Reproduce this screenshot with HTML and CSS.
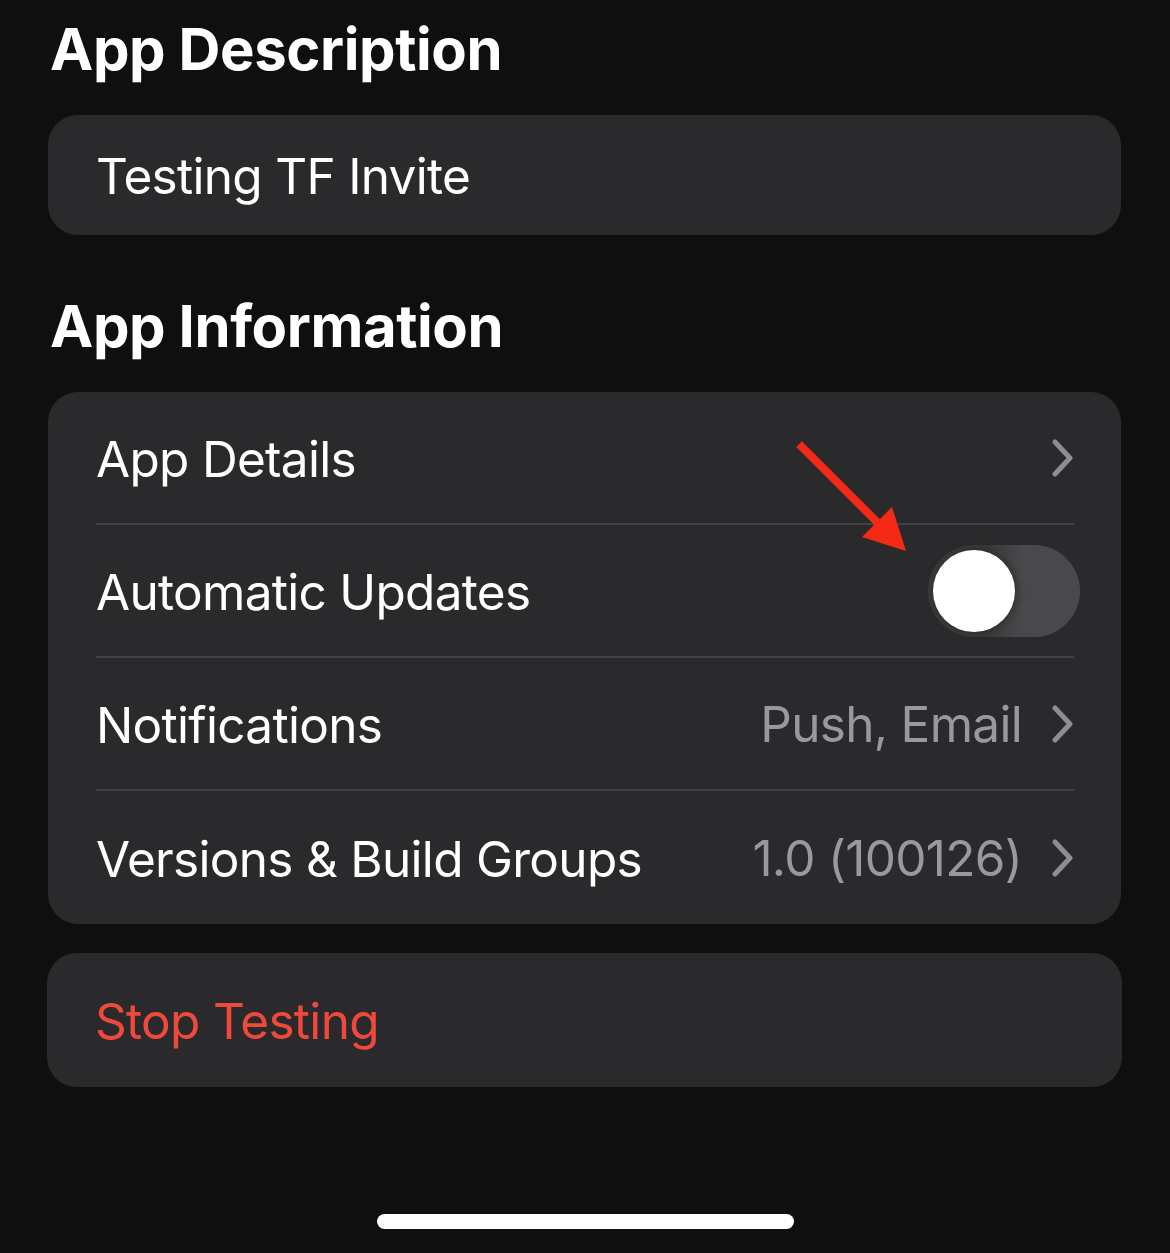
FILE: index.html
```html
<!DOCTYPE html>
<html>
<head>
<meta charset="utf-8">
<link rel="stylesheet" href="styles.css">
</head>
<body>
<div class="screen">
  <h2 class="section-title first">App Description</h2>
  <div class="card">
    <div class="row single"><span class="label">Testing TF Invite</span></div>
  </div>

  <h2 class="section-title">App Information</h2>
  <div class="card">
    <div class="row">
      <span class="label">App Details</span>
      <span class="trail">
        <svg class="chev" width="22" height="38" viewBox="0 0 22 38"><path d="M3 3 L18 19 L3 35" fill="none" stroke="#8d8d92" stroke-width="5" stroke-linecap="round" stroke-linejoin="round"/></svg>
      </span>
    </div>
    <div class="row">
      <span class="label">Automatic Updates</span>
      <span class="toggle"><span class="knob"></span></span>
      <svg class="arrow" width="130" height="130" viewBox="0 0 130 130">
        <line x1="8" y1="8" x2="90" y2="90" stroke="#f42a17" stroke-width="8" stroke-linecap="square"/>
        <polygon points="112,112 68,98 98,68" fill="#f42a17"/>
      </svg>
    </div>
    <div class="row">
      <span class="label">Notifications</span>
      <span class="trail">
        <span class="value">Push, Email</span>
        <svg class="chev" width="22" height="38" viewBox="0 0 22 38"><path d="M3 3 L18 19 L3 35" fill="none" stroke="#8d8d92" stroke-width="5" stroke-linecap="round" stroke-linejoin="round"/></svg>
      </span>
    </div>
    <div class="row">
      <span class="label">Versions &amp; Build Groups</span>
      <span class="trail">
        <span class="value">1.0 (100126)</span>
        <svg class="chev" width="22" height="38" viewBox="0 0 22 38"><path d="M3 3 L18 19 L3 35" fill="none" stroke="#8d8d92" stroke-width="5" stroke-linecap="round" stroke-linejoin="round"/></svg>
      </span>
    </div>
  </div>

  <div class="card stop">
    <div class="row single tall"><span class="label danger">Stop Testing</span></div>
  </div>

  <div class="home-bar"></div>
</div>
</body>
</html>
```

FILE: styles.css
```css
* { box-sizing: border-box; }
html, body {
  margin: 0;
  padding: 0;
  background: #0f0f0f;
}
.screen {
  width: 1170px;
  height: 1253px;
  background: #0f0f0f;
  font-family: Inter, "Noto Sans", sans-serif;
  color: #ffffff;
  padding: 0 48px;
  display: flex;
  flex-direction: column;
  position: relative;
  overflow: hidden;
}
.section-title {
  margin: 0;
  font-size: 58px;
  font-weight: 700;
  letter-spacing: -0.4px;
  line-height: 70px;
  padding-left: 2px;
}
.section-title.first {
  margin-top: 14px;
  margin-bottom: 31px;
}
.section-title:not(.first) {
  margin-top: 56px;
  margin-bottom: 31px;
}
.card {
  background: #2a2a2c;
  border-radius: 30px;
  padding: 0 47px 0 48px;
  width: 1073px;
}
.row {
  position: relative;
  height: 133px;
  display: flex;
  align-items: center;
  justify-content: space-between;
  border-bottom: 2px solid #424244;
}
.row:last-child { border-bottom: none; }
.row.single { height: 120px; }
.row.tall { height: 134px; }
.card.stop {
  margin-top: 29px;
  width: 1075px;
  margin-left: -1px;
}
.label {
  font-size: 49.5px;
  letter-spacing: -0.7px;
  font-weight: 400;
  padding-top: 2px;
}
.danger { color: #f0493c; }
.trail {
  display: flex;
  align-items: center;
  gap: 30px;
}
.value {
  color: #98989e;
  font-size: 49.5px;
  letter-spacing: -0.7px;
}
.chev { display: block; margin-right: 0; }
.toggle {
  width: 152px;
  height: 92px;
  border-radius: 46px;
  background: linear-gradient(90deg, #3a3a3d 0%, #3a3a3d 40%, #49494c 62%, #49494c 100%);
  position: relative;
  margin-right: -6px;
}
.knob {
  position: absolute;
  left: 5px;
  top: 5px;
  width: 82px;
  height: 82px;
  border-radius: 50%;
  background: #ffffff;
  box-shadow: 2px 0 10px rgba(0,0,0,0.35);
}
.arrow {
  position: absolute;
  left: 698px;
  top: -86px;
}
.home-bar {
  position: absolute;
  left: 377px;
  top: 1214px;
  width: 417px;
  height: 15px;
  border-radius: 8px;
  background: #ffffff;
}
```
